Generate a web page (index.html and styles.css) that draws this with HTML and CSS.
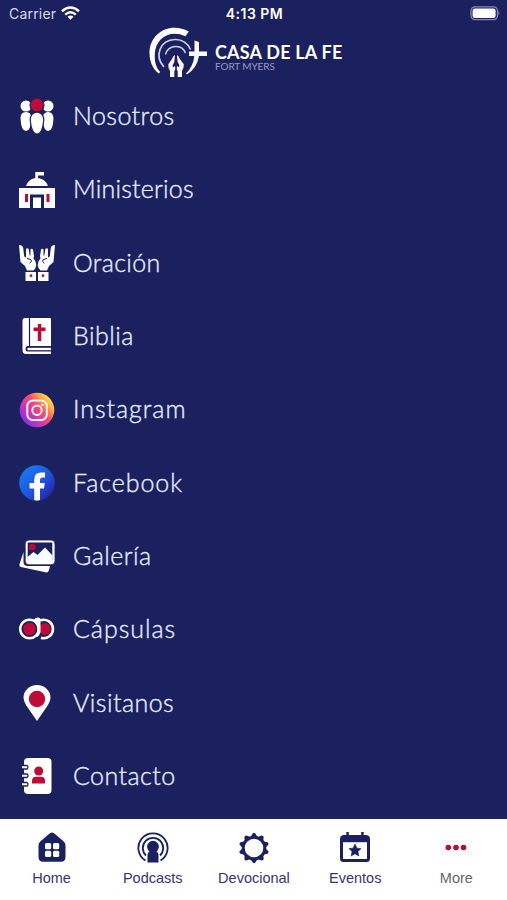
FILE: index.html
```html
<!DOCTYPE html>
<html lang="es">
<head>
<meta charset="utf-8">
<title>Casa de la Fe</title>
<link rel="stylesheet" href="styles.css">
</head>
<body>
<div class="app">
  <div class="status">
    <div class="carrier"><span>Carrier</span>
      <svg width="19" height="15" viewBox="0 0 19 15" fill="none" stroke="#fff" stroke-width="2.5"><path d="M1 5.2Q9.500-2.200 18 5.200M4.200 8.600Q9.500 4 14.800 8.600"/><path d="M6.500 10.700Q9.500 8.300 12.500 10.700L9.500 13.800Z" fill="#fff" stroke="none"/></svg>
    </div>
    <div class="time">4:13 PM</div>
    <div class="battery"><svg width="30" height="15" viewBox="0 0 30 15"><rect x="1" y=".8" width="26.500" height="12.800" rx="4" fill="none" stroke="#8587ad" stroke-width="1.300"/><rect x="2.600" y="2.500" width="23" height="9.500" rx="2.300" fill="#fff"/><path d="M28.600 5q1.700 2.200 0 4.400z" fill="#8587ad"/></svg></div>
  </div>
  <header class="brand">
    <svg width="60" height="54" viewBox="148 25 60 54" fill="#fff">
      <path d="M188.800 31.500C170 21.500 149.500 33 149.500 53C149.500 62 153 69 158.800 73.500L160.200 72C155.500 66.500 154.500 61 154.800 54C155.500 38 170 29 185.500 36.200Z"/>
      <path d="M164 67C154 56 160 40 175 39.500C183 39.300 188 44 190.500 49.500" fill="none" stroke="#cfd3e8" stroke-width="1.700"/>
      <path d="M165.500 54.500C168 44.500 182 43.500 185.500 53" fill="none" stroke="#cfd3e8" stroke-width="1.500"/>
      <path d="M194.500 40.500L199 42V51.500H207V56H199Q197 68 187 74.500L186 73.500Q193.500 66 194.300 56H189V51.500H194.500Z"/>
      <path d="M174.900 55Q173 56 172 59L168.300 64.200Q168 68 170 71V77H174.300V71.500Q176 69 175 66L172.800 67.500Q172 65 174.300 62ZM176.900 55Q178.800 56 179.800 59L183.800 64.200Q184 68 182 71V77H177.700V71.500Q176 69 177 66L179.200 67.500Q180 65 177.700 62Z"/>
    </svg>
    <div class="wordmark"><b>CASA DE LA FE</b><small>FORT MYERS</small></div>
  </header>
  <main class="menu">
    <a class="row nosotros"><svg viewBox="0 0 36 36" fill="#fff"><circle cx="7" cy="8" r="5.500"/><circle cx="29" cy="8" r="5.500"/><path d="M1.500 20Q1.500 14 7 14T12 20Q12 33 7 33T1.500 20ZM24 20Q24 14 29 14T34.500 20Q34 33 29 33T24 20Z"/><g stroke="#1b215e" stroke-width="1.200"><circle cx="18" cy="7" r="7" fill="#bf0a38"/><path d="M11.200 22C11.200 11.500 24.800 11.500 24.800 22Q23.500 36 18 36T11.200 22Z"/></g></svg><span>Nosotros</span></a>
    <a class="row ministerios"><svg viewBox="0 0 36 36" fill="#fff"><path d="M16.300 6V0H25V3.500H19V6Q27 7.500 29 14H7Q9 7.500 16.300 6ZM0 16H36V36H0Z"/><path d="M11 22.500H25V36H22V25.500H14V36H11Z" fill="#1b215e"/><path d="M6 22H9V30H6ZM27.500 22H30.500V30H27.500Z" fill="#bf0a38"/></svg><span>Ministerios</span></a>
    <a class="row oracion"><svg viewBox="0 0 36 36" fill="#fff"><g id="hand"><path d="M0 0Q3.500 0 4.200 3L5.200 11.500L7 12.500V4Q8 2.500 9.700 4L10.700 10.500L11.500 10.500V4.500Q12.500 3 14 4.500L15 11L14.500 13.500Q17.300 16 17.300 20Q17 23.500 14.500 25.500H8L6 21L1.500 17Z"/><path d="M8 13.300L12 14.800Q13.500 16 10.700 18.300" fill="none" stroke="#1b215e" stroke-width="1"/><path d="M6.500 27H17V36H6.500Z"/><circle cx="12" cy="30.700" r="1.400" fill="#bf0a38"/></g><use href="#hand" transform="matrix(-1 0 0 1 36 0)"/></svg><span>Oración</span></a>
    <a class="row biblia"><svg viewBox="0 0 36 36"><path d="M5 0H31Q32 0 32 1V28H8Q6.500 28.500 6.500 31T8.500 33.500H32V36H7Q3.500 36 3.500 32V3Q3.500 0 6 0Z" fill="#fff"/><path d="M10.500 0V28" stroke="#1b215e" stroke-width="1.200"/><path d="M8.500 29.800H32V32.200H8.500Z" fill="#fff"/><path d="M18.800 6H22.300V9.500H26.500V13H22.300V23H18.800V13H14.500V9.500H18.800Z" fill="#bf0a38"/></svg><span>Biblia</span></a>
    <a class="row instagram"><svg viewBox="0 0 36 36"><defs><linearGradient id="ig" x1=".1" y1=".8" x2=".85" y2=".15"><stop stop-color="#8d2de8"/><stop offset=".3" stop-color="#c936bd"/><stop offset=".6" stop-color="#ff4b69"/><stop offset=".85" stop-color="#ffae45"/><stop offset="1" stop-color="#ffd84c"/></linearGradient></defs><circle cx="18" cy="18" r="17.300" fill="url(#ig)"/><g fill="none" stroke="#fff" stroke-width="1.900"><rect x="8.300" y="8.500" width="19.500" height="19.500" rx="5.500"/><circle cx="18" cy="18.300" r="4.700"/></g><circle cx="23.400" cy="12.700" r="1.200" fill="#fff"/></svg><span>Instagram</span></a>
    <a class="row facebook"><svg viewBox="0 0 36 36"><defs><linearGradient id="fb" x1=".1" y1=".1" x2=".9" y2=".9"><stop stop-color="#167bf0"/><stop offset=".55" stop-color="#2055dc"/><stop offset="1" stop-color="#2421a4"/></linearGradient></defs><circle cx="18" cy="18" r="17.800" fill="url(#fb)"/><path d="M15.200 35V23.500H10.500V18H15.200V14.500Q15.200 7.500 22 7.500H26V12.500H23.500Q21 12.500 21 15V18H25.700L25 23.500H21V35Q18 36 15.200 35Z" fill="#fff"/></svg><span>Facebook</span></a>
    <a class="row galeria"><svg viewBox="0 0 36 36"><path d="M4.500 14L.4 26.500Q0 28.500 2 29L26.500 34.300Q29 35 29.800 32.500L31 28H8Q4.500 27.500 4.500 24Z" fill="#fff"/><rect x="6.200" y="2" width="29.800" height="24.800" rx="4" fill="#fff" stroke="#1b215e" stroke-width=".8"/><rect x="8.700" y="4.500" width="24.600" height="19" rx="1" fill="#1b215e"/><path d="M8.500 19L14.500 14L18.500 17L26 9.500L33.500 17.500V24H8.500Z" fill="#fff"/><circle cx="13.300" cy="9" r="3.300" fill="#bf0a38"/></svg><span>Galería</span></a>
    <a class="row capsulas"><svg viewBox="0 0 36 36" fill="none"><path d="M21 9.600A9.200 9.200 0 1 1 22 26.800" stroke="#fff" stroke-width="2.700"/><circle cx="25.800" cy="18" r="6" fill="#bf0a38"/><circle cx="10.500" cy="18" r="9.300" fill="#1b215e" stroke="#fff" stroke-width="2.600"/><circle cx="10.500" cy="18" r="6.300" fill="#bf0a38"/><path d="M14.500 9L16.500 7.300Q19 5.500 21.500 7.800V21Q19 28 16 25Q21 18 16 12Z" fill="#fff"/></svg><span>Cápsulas</span></a>
    <a class="row visitanos"><svg viewBox="0 0 36 36"><path d="M18 36L7 20Q4.500 16 4.500 12.500A13.500 12.500 0 0 1 31.500 12.500Q31.500 16 29 20Z" fill="#fff"/><circle cx="18" cy="14" r="8.200" fill="#bf0a38"/></svg><span>Visitanos</span></a>
    <a class="row contacto"><svg viewBox="0 0 36 36"><rect x="5" y="0" width="27.500" height="36" rx="4" fill="#fff"/><path d="M3 7.500H8Q10 9 8 11H3M3 16H8Q10 17.500 8 19.500H3M3 24.500H8Q10 26 8 28H3" fill="#fff" stroke="#1b215e" stroke-width="1.300"/><circle cx="19.700" cy="13" r="4.500" fill="#bf0a38"/><path d="M13 25.500V23Q13 18.800 17 18.800H22Q26 18.800 26 23V25.500Z" fill="#bf0a38"/></svg><span>Contacto</span></a>
  </main>
  <nav class="tabs">
    <a class="tab"><svg viewBox="0 0 32 32"><path d="M16 .5Q17.500 .5 19 2L27.500 9.200Q29.500 11 29.500 13.500V25Q29.500 29.800 25 29.800H7Q2.500 29.800 2.500 25V13.500Q2.500 11 4.500 9.200L13 2Q14.500 .5 16 .5Z" fill="#1b215e"/><g fill="#fff"><rect x="9" y="11" width="6.200" height="6.200" rx="1.500"/><rect x="17" y="11" width="6.200" height="6.200" rx="1.500"/><rect x="9" y="18.800" width="6.200" height="6.200" rx="1.500"/><rect x="17" y="18.800" width="6.200" height="6.200" rx="1.500"/></g></svg><span>Home</span></a>
    <a class="tab"><svg viewBox="0 0 32 32" fill="none" stroke="#1b215e" stroke-width="1.800"><path d="M8.500 28.500A14.600 14.600 0 1 1 23.500 28.500M9 23.500A10.200 10.200 0 1 1 23 23.500"/><path d="M12.500 19.500A5.900 5.900 0 1 1 19.500 19.500Q21.500 20.500 21.500 23V30.500H10.500V23Q10.500 20.500 12.500 19.500Z" fill="#1b215e" stroke="none"/></svg><span>Podcasts</span></a>
    <a class="tab"><svg viewBox="0 0 32 32"><g fill="#1b215e"><g id="ray"><path id="tooth" d="M12.300 5.500L14.700 1.400Q16 .3 17.300 1.400L19.700 5.500Z"/><use href="#tooth" transform="rotate(36 16 16)"/><use href="#tooth" transform="rotate(72 16 16)"/><use href="#tooth" transform="rotate(108 16 16)"/><use href="#tooth" transform="rotate(144 16 16)"/></g><use href="#ray" transform="rotate(180 16 16)"/></g><circle cx="16" cy="16" r="10.800" fill="#fff" stroke="#1b215e" stroke-width="3"/></svg><span>Devocional</span></a>
    <a class="tab"><svg viewBox="0 0 32 32"><path d="M7.300 3V0H9.800V3H22.200V0H24.700V3H27.500Q31 3.500 31 7V26.500Q31 30 27.500 30H4.500Q1 30 1 26.500V7Q1 3.500 4.500 3H7.300Z" fill="#1b215e"/><path d="M4 10.200H28V27H4Z" fill="#fff"/><path d="M16 12L18 16.200L22 16.600L19 19.600L19.800 24L16 21.800L12.200 24L13 19.600L10 16.600L14 16.200Z" fill="#1b215e" stroke="#1b215e" stroke-width=".6"/></svg><span>Eventos</span></a>
    <a class="tab more"><svg viewBox="0 0 32 32" fill="#b80a3e"><circle cx="8.300" cy="15.500" r="2.800"/><circle cx="16" cy="15.500" r="2.800"/><circle cx="23.500" cy="15.500" r="2.800"/></svg><span>More</span></a>
  </nav>
</div>
</body>
</html>
```
FILE: styles.css
```css
* { box-sizing: border-box; }
body { margin: 0; background: #1b215e; }
.app { width: 507px; height: 900px; display: flex; flex-direction: column; overflow: hidden; background: #1b215e; color: #fff; font-family: Inter, "Liberation Sans", sans-serif; }
.status { height: 25px; flex: none; display: grid; grid-template-columns: 1fr 1fr 1fr; padding: 4px 7px 0 9px; font-size: 14px; line-height: 19px; }
.carrier { display: flex; gap: 5px; color: #d9dbea; letter-spacing: .2px; }
.carrier svg { margin-top: 2px; }
.time { text-align: center; font-weight: 600; font-size: 14px; letter-spacing: .5px; }
.battery { display: flex; justify-content: flex-end; padding-top: 2px; }
.brand { height: 54.700px; flex: none; display: flex; padding-left: 148px; gap: 7px; }
.brand svg { flex: none; }
.wordmark { padding-top: 19px; font-family: Lato, sans-serif; display: flex; flex-direction: column; white-space: nowrap; }
.wordmark b { font-size: 18px; line-height: 17px; font-weight: 700; letter-spacing: .2px; }
.wordmark small { font-size: 10px; line-height: 10px; color: #989bc0; font-weight: 400; letter-spacing: -.1px; }
.menu { height: 739.800px; flex: none; display: flex; flex-direction: column; }
.row { height: 73.300px; flex: none; display: flex; align-items: center; padding-left: 19px; gap: 18px; }
.row svg { width: 36px; height: 36px; flex: none; }
.row span { font-family: Lato, sans-serif; font-weight: 300; -webkit-text-stroke: .35px #e6edff; font-size: 25px; line-height: 30px; padding-bottom: 2.400px; color: #e6edff; white-space: nowrap; letter-spacing: .45px; }
.row.ministerios span { letter-spacing: .2px; }
.row.oracion span { letter-spacing: .35px; }
.row.instagram span, .row.facebook span, .row.capsulas span { letter-spacing: .95px; }
.tabs { flex: 1; background: #fff; display: grid; grid-template-columns: repeat(5, 1fr); padding: 13px 0 0 1px; }
.tab { display: flex; flex-direction: column; align-items: center; color: #33376f; font: 14.500px/18px "Liberation Sans", sans-serif; }
.tab svg { width: 32px; height: 32px; margin-bottom: 5px; }
.more { color: #666; }
```
